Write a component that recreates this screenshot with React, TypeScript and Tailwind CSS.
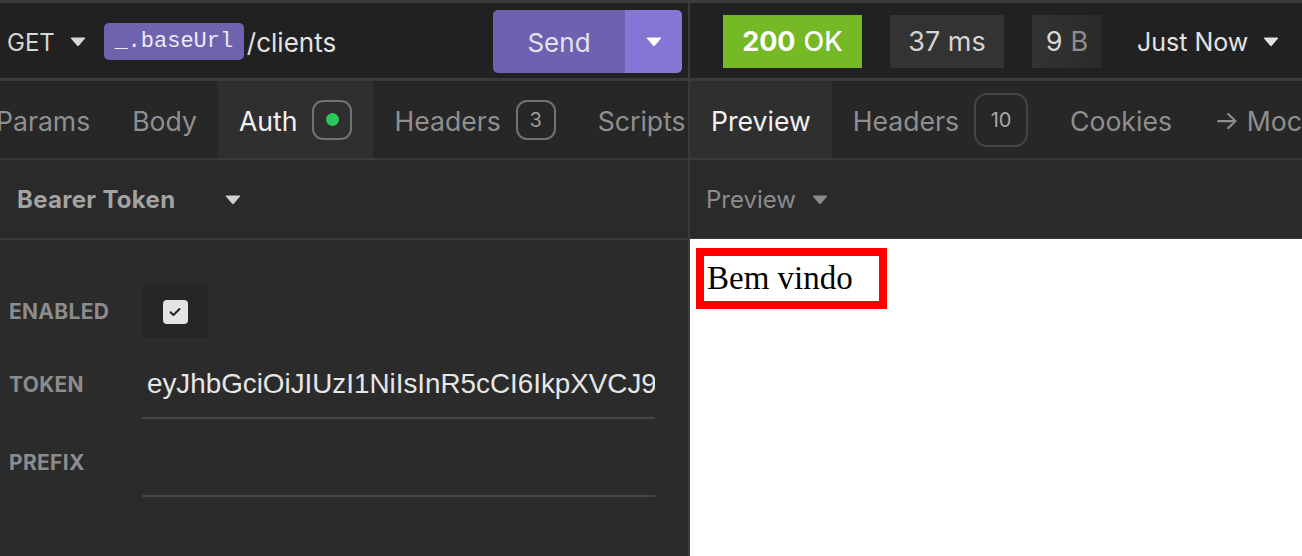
import React from "react"

function Caret({ className = "" }: { className?: string }) {
  return (
    <svg viewBox="0 0 16 10" className={className} fill="currentColor">
      <path d="M1 1.5 Q0.5 0.5 1.8 0.5 H14.2 Q15.5 0.5 15 1.5 L8.8 8.8 Q8 9.6 7.2 8.8 Z" />
    </svg>
  )
}

function Tab({ label, active, children }: { label: string; active?: boolean; children?: React.ReactNode }) {
  return (
    <div className={`flex h-full shrink-0 items-center gap-[15px] px-[21px] ${active ? "bg-[#2f2f2f] text-[#f2f2f2]" : "text-[#8f8f8f]"}`}>
      <span className="pt-[3px] text-[26.6px] leading-none">{label}</span>
      {children}
    </div>
  )
}

function Field({ label, children, rowClass }: { label: string; children: React.ReactNode; rowClass: string }) {
  return (
    <div className={`flex ${rowClass}`}>
      <div className="flex w-[133px] shrink-0 items-center text-[21px] font-bold tracking-[0.3px] text-[#8c8c8c]">{label}</div>
      {children}
    </div>
  )
}

export default function App() {
  return (
    <div className="flex h-[556px] w-[1302px] flex-col overflow-hidden bg-[#2b2b2b] font-[Inter,sans-serif]">
      <div className="h-[3px] shrink-0 bg-[#3b3b3b]" />
      <div className="flex min-h-0 flex-1">
        {/* request side */}
        <div className="flex w-[688px] shrink-0 flex-col">
          <div className="flex h-[75px] shrink-0 items-center bg-[#212121] pl-[7px] pr-[6px] pt-[2px]">
            <span className="pt-[2px] text-[24px] text-[#d6d6d6]">GET</span>
            <Caret className="ml-[15px] h-[10px] w-[16px] text-[#d6d6d6]" />
            <span className="ml-[18px] flex h-[37px] w-[140px] items-center justify-center rounded-[5px] bg-[#6f62ae] font-['Liberation_Mono',monospace] text-[22px] text-[#ecebf5]">
              _.baseUrl
            </span>
            <span className="ml-[3px] pt-[2px] text-[26px] text-[#e2e2e2]">/clients</span>
            <div className="ml-auto flex h-[63px] w-[189px] overflow-hidden rounded-[5px]">
              <div className="flex flex-1 items-center justify-center bg-[#6e61b0] pt-[2px] text-[26px] text-[#e4e2ef]">Send</div>
              <div className="flex w-[57px] items-center justify-center bg-[#8775d5]">
                <Caret className="h-[10px] w-[16px] text-white" />
              </div>
            </div>
          </div>
          <div className="h-[3px] shrink-0 bg-[#3a3a3a]" />
          <div className="ml-[-25px] flex h-[77px] shrink-0 items-center bg-[#272727]">
            <Tab label="Params" />
            <Tab label="Body" />
            <Tab label="Auth" active>
              <span className="flex h-[40px] w-[40px] items-center justify-center rounded-[11px] border-2 border-[#727272]">
                <span className="h-[13px] w-[13px] rounded-full bg-[#2ac75a]" />
              </span>
            </Tab>
            <Tab label="Headers">
              <span className="flex h-[40px] w-[40px] items-center justify-center rounded-[11px] border-2 border-[#727272] text-[20px] text-[#9a9a9a]">3</span>
            </Tab>
            <Tab label="Scripts" />
          </div>
          <div className="h-[2px] shrink-0 bg-[#3a3a3a]" />
          <div className="flex h-[78px] shrink-0 items-center bg-[#2a2a2a] pl-[17px] pt-[2px]">
            <span className="text-[24px] font-bold tracking-[0.3px] text-[#a3a3a3]">Bearer Token</span>
            <Caret className="ml-[50px] h-[10px] w-[16px] text-[#d0d0d0]" />
          </div>
          <div className="h-[2px] shrink-0 bg-[#3a3a3a]" />
          <div className="flex flex-1 flex-col pl-[9px] pt-[45px]">
            <Field label="ENABLED" rowClass="h-[53px]">
              <div className="flex w-[66px] items-center justify-center bg-[#262626]">
                <span className="flex h-[24px] w-[25px] items-center justify-center rounded-[4px] bg-[#e4e4e4]">
                  <svg viewBox="0 0 12 10" className="h-[10px] w-[12px]" fill="none" stroke="#222" strokeWidth="2" strokeLinecap="round" strokeLinejoin="round">
                    <path d="M1.5 5.2 L4.5 8 L10.5 2" />
                  </svg>
                </span>
              </div>
            </Field>
            <Field label="TOKEN" rowClass="mt-[12px] h-[69px]">
              <div className="flex w-[513px] items-center overflow-hidden border-b-2 border-[#454545] pl-[5px]">
                <span className="whitespace-nowrap font-['Liberation_Sans',sans-serif] text-[27.8px] text-[#e6e6e6]">eyJhbGciOiJIUzI1NiIsInR5cCI6IkpXVCJ9</span>
              </div>
            </Field>
            <Field label="PREFIX" rowClass="mt-[9px] h-[69px]">
              <div className="w-[513px] border-b-2 border-[#454545]" />
            </Field>
          </div>
        </div>
        <div className="w-[2px] shrink-0 bg-[#3a3a3a]" />
        {/* response side */}
        <div className="flex min-w-0 flex-1 flex-col">
          <div className="flex h-[75px] shrink-0 items-center bg-[#212121] pl-[33px] pt-[2px]">
            <span className="flex h-[53px] w-[139px] items-center justify-center gap-[8px] bg-[#75b924] pt-[2px] text-[27px] text-white">
              <span className="font-bold">200</span>
              <span className="font-medium">OK</span>
            </span>
            <span className="ml-[28px] flex h-[53px] w-[114px] items-center justify-center bg-[#333333] pt-[2px] text-[27px] text-[#d4d4d4]">37 ms</span>
            <span className="ml-[28px] flex h-[53px] w-[70px] items-center justify-center bg-gradient-to-r from-[#333333] to-[#2a2a2a] pt-[2px] text-[27px]">
              <span className="text-[#d8d8d8]">9</span>
              <span className="ml-[8px] text-[#8e8e8e]">B</span>
            </span>
            <span className="ml-[35px] pt-[2px] text-[25px] text-[#e2e2e2]">Just Now</span>
            <Caret className="ml-[15px] h-[10px] w-[16px] text-[#e2e2e2]" />
          </div>
          <div className="h-[3px] shrink-0 bg-[#3a3a3a]" />
          <div className="flex h-[77px] shrink-0 items-center bg-[#272727]">
            <Tab label="Preview" active />
            <Tab label="Headers">
              <span className="flex h-[54px] w-[54px] items-center justify-center rounded-[13px] border-2 border-[#454545] text-[20px] text-[#a8a8a8]">10</span>
            </Tab>
            <Tab label="Cookies" />
            <Tab label="→ Mock" />
          </div>
          <div className="h-[2px] shrink-0 bg-[#3a3a3a]" />
          <div className="flex h-[78px] shrink-0 items-center bg-[#2a2a2a] pl-[16px] pt-[2px]">
            <span className="text-[24px] text-[#8c8c8c]">Preview</span>
            <Caret className="ml-[16px] h-[10px] w-[16px] text-[#8c8c8c]" />
          </div>
          <div className="h-[1px] shrink-0 bg-[#3a3a3a]" />
          <div className="flex-1 bg-white pl-[6px] pt-[9px]">
            <div className="inline-block w-[191px] border-8 border-[#ff0000] px-[3px] py-[1px] font-['Liberation_Serif',serif] text-[33px] leading-[43px] text-black">
              Bem vindo
            </div>
          </div>
        </div>
      </div>
    </div>
  )
}
